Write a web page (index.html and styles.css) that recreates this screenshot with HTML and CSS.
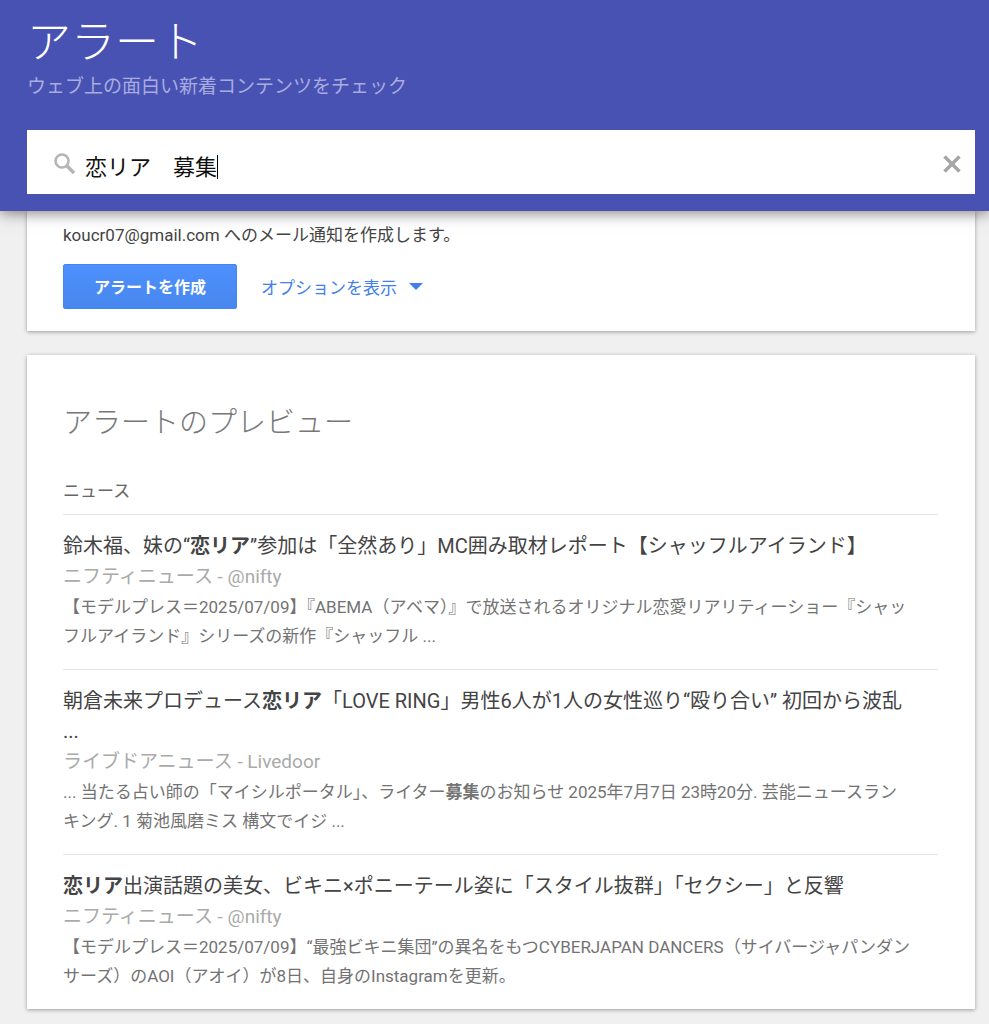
FILE: index.html
```html
<!DOCTYPE html>
<html lang="ja">
<head>
    <meta charset="UTF-8">
    <meta name="viewport" content="width=device-width, initial-scale=1.0">
    <title>アラート</title>
    <link rel="stylesheet" href="styles.css">
</head>
<body>

<header class="header">
    <h1>アラート</h1>
    <p class="tagline">ウェブ上の面白い新着コンテンツをチェック</p>
    <form class="search">
        <label for="query" aria-label="検索キーワード">
            <svg class="search-icon" width="22" height="22" viewBox="0 0 22 22" fill="none" stroke="#b5b5b5">
                <circle cx="8" cy="8" r="6.500" stroke-width="2.600"/>
                <path d="M13 13L20 20" stroke-width="3.600"/>
            </svg>
        </label>
        <input type="text" id="query" value="恋リア　募集" autocomplete="off">
        <span class="caret"></span>
        <button type="reset" class="clear" aria-label="クリア">
            <svg width="18" height="18" viewBox="0 0 18 18" fill="none" stroke="#a6a6a6" stroke-width="3.400">
                <path d="M1.500 1.500L16.500 16.500M16.500 1.500L1.500 16.500"/>
            </svg>
        </button>
    </form>
</header>

<main>
    <section class="card create">
        <p>koucr07@gmail.com へのメール通知を作成します。</p>
        <div class="actions">
            <button type="button" class="create-btn">アラートを作成</button>
            <a href="#" class="options">オプションを表示 <span class="arrow"></span></a>
        </div>
    </section>

    <section class="card preview">
        <h2>アラートのプレビュー</h2>
        <h3>ニュース</h3>

        <article class="item">
            <a href="#" class="title">鈴木福、妹の“<b>恋リア</b>”参加は「全然あり」MC囲み取材レポート【シャッフルアイランド】</a>
            <p class="source">ニフティニュース - @nifty</p>
            <p class="snippet">【モデルプレス＝2025/07/09】『ABEMA（アベマ）』で放送されるオリジナル恋愛リアリティーショー『シャッ<br>フルアイランド』シリーズの新作『シャッフル ...</p>
        </article>

        <article class="item">
            <a href="#" class="title">朝倉未来プロデュース<b>恋リア</b>「LOVE RING」男性6人が1人の女性巡り“殴り合い” 初回から波乱<br>...</a>
            <p class="source">ライブドアニュース - Livedoor</p>
            <p class="snippet">... 当たる占い師の「マイシルポータル」、ライター<b>募集</b>のお知らせ 2025年7月7日 23時20分. 芸能ニュースラン<br>キング. 1 菊池風磨ミス 構文でイジ ...</p>
        </article>

        <article class="item">
            <a href="#" class="title"><b>恋リア</b>出演話題の美女、ビキニ×ポニーテール姿に「スタイル抜群」「セクシー」と反響</a>
            <p class="source">ニフティニュース - @nifty</p>
            <p class="snippet">【モデルプレス＝2025/07/09】“最強ビキニ集団”の異名をもつCYBERJAPAN DANCERS（サイバージャパンダン<br>サーズ）のAOI（アオイ）が8日、自身のInstagramを更新。</p>
        </article>
    </section>
</main>

</body>
</html>
```
FILE: styles.css
```css
* { margin: 0; padding: 0; box-sizing: border-box; }
body {
    font-family: Roboto, "Noto Sans CJK JP", sans-serif;
    font-size: 17px;
    background: #f0f0f0;
    color: #444;
}
input, button { font-family: inherit; border: none; }
a { text-decoration: none; }

.header {
    position: relative;
    z-index: 1;
    padding: 14px 14px 17px 27px;
    background: #4852b2;
    box-shadow: 0 2px 14px rgba(0,0,0,0.5);
}
.header h1 {
    font-size: 44px;
    font-weight: 300;
    line-height: 58px;
    color: #fff;
}
.tagline {
    font-size: 19px;
    line-height: 30px;
    margin-bottom: 28px;
    color: #a8ace0;
}
.search {
    display: flex;
    align-items: center;
    height: 64px;
    padding: 4px 14px 0 27px;
    background: #fff;
}
.search-icon { display: block; margin-right: 9px; }
.search input {
    field-sizing: content;
    min-width: 20px;
    height: 40px;
    padding-top: 2px;
    font-size: 22px;
    color: #111;
    background: none;
    outline: none;
}
.caret {
    width: 1px;
    height: 24px;
    margin-top: 6px;
    background: #000;
}
.clear {
    display: flex;
    margin-left: auto;
    padding: 2px 0;
    background: none;
    cursor: pointer;
}

.card {
    margin: 0 14px 24px 27px;
    padding: 0 37px 0 36px;
    background: #fff;
    box-shadow: 0 1px 4px rgba(0,0,0,0.35);
}
.create { padding-top: 9px; padding-bottom: 22px; }
.create p { line-height: 30px; }
.actions {
    display: flex;
    align-items: center;
    gap: 24px;
    margin-top: 14px;
}
.create-btn {
    height: 45px;
    padding: 0 30px 2px;
    font-size: 16px;
    font-weight: bold;
    color: #fff;
    background: linear-gradient(#4d90fe, #4787ed);
    border: 1px solid #4285f0;
    border-radius: 2px;
}
.options {
    display: flex;
    align-items: center;
    gap: 12px;
    color: #427fed;
}
.arrow {
    border: 7px solid transparent;
    border-top-color: #427fed;
    border-bottom: none;
}

.preview { padding-top: 46px; }
.preview h2 {
    font-size: 29px;
    font-weight: 300;
    line-height: 44px;
    color: #777;
}
.preview h3 {
    margin-top: 29px;
    font-size: 17px;
    font-weight: normal;
    line-height: 34px;
    padding-bottom: 6px;
    color: #666;
}
.item {
    padding: 16px 0 18px;
    border-top: 1px solid #e5e5e5;
}
.title {
    display: block;
    font-size: 20px;
    line-height: 30px;
    color: #444;
}
.source {
    font-size: 19px;
    line-height: 32px;
    color: #aaa;
}
.snippet {
    line-height: 29px;
    color: #737373;
}
```
